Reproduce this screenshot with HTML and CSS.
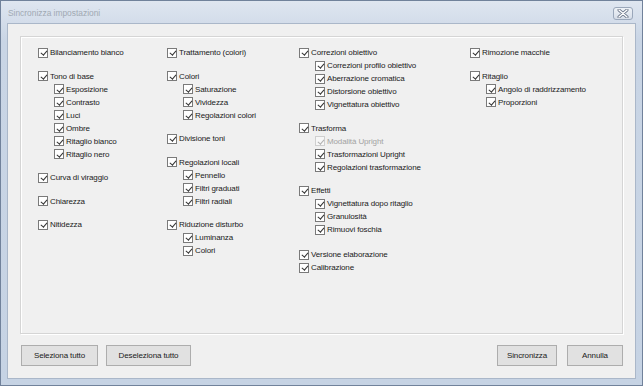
FILE: index.html
```html
<!DOCTYPE html>
<html lang="it">
<head>
    <meta charset="UTF-8">
    <meta name="viewport" content="width=device-width, initial-scale=1.0">
    <title>Sincronizza impostazioni</title>
    <link rel="stylesheet" href="styles.css">
</head>
<body>
    <div class="window">
        <div class="titlebar">
            <span class="title">Sincronizza impostazioni</span>
            <span class="close">
                <svg width="12" height="9" viewBox="0 0 12 9">
                    <path d="M2 1 L10 8 M10 1 L2 8" stroke="#6a7588" stroke-width="3" stroke-linecap="round"/>
                    <path d="M2 1 L10 8 M10 1 L2 8" stroke="#fff" stroke-width="1.4" stroke-linecap="round"/>
                </svg>
            </span>
        </div>

        <div class="client">
            <div class="panel">
                <div class="col">
                    <div class="group">
                        <div class="item"><span class="box"></span>Bilanciamento bianco</div>
                    </div>
                    <div class="group">
                        <div class="item"><span class="box"></span>Tono di base</div>
                        <div class="sub">
                            <div class="item"><span class="box"></span>Esposizione</div>
                            <div class="item"><span class="box"></span>Contrasto</div>
                            <div class="item"><span class="box"></span>Luci</div>
                            <div class="item"><span class="box"></span>Ombre</div>
                            <div class="item"><span class="box"></span>Ritaglio bianco</div>
                            <div class="item"><span class="box"></span>Ritaglio nero</div>
                        </div>
                    </div>
                    <div class="group">
                        <div class="item"><span class="box"></span>Curva di viraggio</div>
                    </div>
                    <div class="group">
                        <div class="item"><span class="box"></span>Chiarezza</div>
                    </div>
                    <div class="group">
                        <div class="item"><span class="box"></span>Nitidezza</div>
                    </div>
                </div>

                <div class="col">
                    <div class="group">
                        <div class="item"><span class="box"></span>Trattamento (colori)</div>
                    </div>
                    <div class="group">
                        <div class="item"><span class="box"></span>Colori</div>
                        <div class="sub">
                            <div class="item"><span class="box"></span>Saturazione</div>
                            <div class="item"><span class="box"></span>Vividezza</div>
                            <div class="item"><span class="box"></span>Regolazioni colori</div>
                        </div>
                    </div>
                    <div class="group">
                        <div class="item"><span class="box"></span>Divisione toni</div>
                    </div>
                    <div class="group">
                        <div class="item"><span class="box"></span>Regolazioni locali</div>
                        <div class="sub">
                            <div class="item"><span class="box"></span>Pennello</div>
                            <div class="item"><span class="box"></span>Filtri graduati</div>
                            <div class="item"><span class="box"></span>Filtri radiali</div>
                        </div>
                    </div>
                    <div class="group">
                        <div class="item"><span class="box"></span>Riduzione disturbo</div>
                        <div class="sub">
                            <div class="item"><span class="box"></span>Luminanza</div>
                            <div class="item"><span class="box"></span>Colori</div>
                        </div>
                    </div>
                </div>

                <div class="col">
                    <div class="group">
                        <div class="item"><span class="box"></span>Correzioni obiettivo</div>
                        <div class="sub">
                            <div class="item"><span class="box"></span>Correzioni profilo obiettivo</div>
                            <div class="item"><span class="box"></span>Aberrazione cromatica</div>
                            <div class="item"><span class="box"></span>Distorsione obiettivo</div>
                            <div class="item"><span class="box"></span>Vignettatura obiettivo</div>
                        </div>
                    </div>
                    <div class="group">
                        <div class="item"><span class="box"></span>Trasforma</div>
                        <div class="sub">
                            <div class="item disabled"><span class="box"></span>Modalità Upright</div>
                            <div class="item"><span class="box"></span>Trasformazioni Upright</div>
                            <div class="item"><span class="box"></span>Regolazioni trasformazione</div>
                        </div>
                    </div>
                    <div class="group wide">
                        <div class="item"><span class="box"></span>Effetti</div>
                        <div class="sub">
                            <div class="item"><span class="box"></span>Vignettatura dopo ritaglio</div>
                            <div class="item"><span class="box"></span>Granulosità</div>
                            <div class="item"><span class="box"></span>Rimuovi foschia</div>
                        </div>
                    </div>
                    <div class="group">
                        <div class="item"><span class="box"></span>Versione elaborazione</div>
                        <div class="item"><span class="box"></span>Calibrazione</div>
                    </div>
                </div>

                <div class="col">
                    <div class="group">
                        <div class="item"><span class="box"></span>Rimozione macchie</div>
                    </div>
                    <div class="group">
                        <div class="item"><span class="box"></span>Ritaglio</div>
                        <div class="sub">
                            <div class="item"><span class="box"></span>Angolo di raddrizzamento</div>
                            <div class="item"><span class="box"></span>Proporzioni</div>
                        </div>
                    </div>
                </div>
            </div>

            <div class="actions">
                <div class="btn-group">
                    <button class="btn btn-select">Seleziona tutto</button>
                    <button class="btn btn-deselect">Deseleziona tutto</button>
                </div>
                <div class="btn-group btn-group-right">
                    <button class="btn btn-sync">Sincronizza</button>
                    <button class="btn btn-cancel">Annulla</button>
                </div>
            </div>
        </div>
    </div>
</body>
</html>
```

FILE: styles.css
```css
body {
    margin: 0;
    padding: 0;
    font-family: 'Liberation Sans', Arial, sans-serif;
    font-size: 8px;
    letter-spacing: -0.12px;
    color: #1a1a1a;
    background-color: #fff;
}

.window {
    width: 643px;
    height: 386px;
    box-sizing: border-box;
    border: 1px solid #71829b;
    background: linear-gradient(#dfe6f0, #c9d5e5 40px, #c6d3e4);
    display: flex;
    flex-direction: column;
}

.titlebar {
    height: 22px;
    display: flex;
    align-items: center;
    justify-content: space-between;
    padding: 0 9px 0 7px;
}

.title {
    color: #a1a9b3;
    font-size: 8.4px;
    letter-spacing: 0;
    padding-top: 2px;
}

.close {
    width: 20px;
    height: 13px;
    box-sizing: border-box;
    border: 1px solid #9aa7ba;
    border-radius: 3px;
    background: linear-gradient(#eef2f7, #d6dde8);
    display: flex;
    align-items: center;
    justify-content: center;
    margin-top: 3px;
}

.client {
    flex: 1;
    margin: 0 6px 6px 6px;
    border: 1px solid #aab7c9;
    background-color: #f0f0f0;
    padding: 12px;
    display: flex;
    flex-direction: column;
}

.panel {
    height: 298px;
    box-sizing: border-box;
    border: 1px solid #d5d5d5;
    box-shadow: inset 1px 1px 0 #fff, 1px 1px 0 #fff;
    padding: 9px 0 0 17px;
    display: grid;
    grid-template-columns: 129px 132px 171px 1fr;
}

.group {
    margin-bottom: 10.5px;
}

.group.wide {
    margin-bottom: 12px;
}

.sub {
    padding-left: 16px;
}

.item {
    display: flex;
    align-items: center;
    height: 13px;
    gap: 2px;
    white-space: nowrap;
}

.box {
    width: 10px;
    height: 10px;
    box-sizing: border-box;
    border: 1px solid #7a7a7a;
    background-color: #fff;
    position: relative;
    flex-shrink: 0;
}

.box::after {
    content: '';
    position: absolute;
    left: 2.5px;
    top: 0.5px;
    width: 2.5px;
    height: 5px;
    border-right: 1px solid #333;
    border-bottom: 1px solid #333;
    transform: rotate(40deg);
}

.item.disabled {
    color: #a3a3a3;
}

.item.disabled .box {
    border-color: #cfcfcf;
    background-color: #f7f7f7;
}

.item.disabled .box::after {
    border-color: #b0b0b0;
}

.actions {
    display: flex;
    justify-content: space-between;
    margin-top: 11px;
    padding-left: 1px;
}

.btn-group {
    display: flex;
    gap: 8px;
}

.btn-group-right {
    gap: 10px;
}

.btn {
    height: 21px;
    box-sizing: border-box;
    border: 1px solid #adadad;
    background-color: #e1e1e1;
    font-family: 'Liberation Sans', Arial, sans-serif;
    font-size: 8px;
    letter-spacing: -0.12px;
    color: #1a1a1a;
    padding: 0;
    margin: 0;
}

.btn-select {
    width: 77px;
}

.btn-deselect {
    width: 85px;
}

.btn-sync {
    width: 60px;
}

.btn-cancel {
    width: 56px;
}
```
